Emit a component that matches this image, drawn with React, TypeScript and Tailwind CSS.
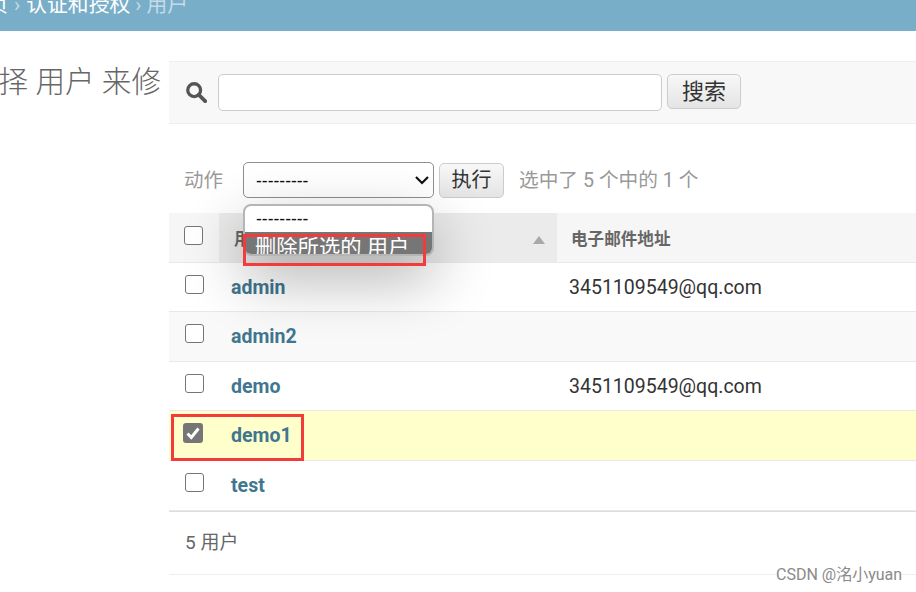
import React from "react";

const font = { fontFamily: '"Roboto", "Noto Sans CJK SC", sans-serif' };

function Box({ checked = false, cls = "" }: { checked?: boolean; cls?: string }) {
  return checked ? (
    <span className={`-ml-[2px] flex h-[20px] w-[20px] items-center justify-center rounded-[3px] bg-[#767676] ${cls}`}>
      <svg viewBox="0 0 20 20" className="h-[20px] w-[20px]">
        <path d="M4.5 10.5 L8.3 14.5 L15.5 5.5" fill="none" stroke="#fff" strokeWidth="3" />
      </svg>
    </span>
  ) : (
    <span className={`block h-[19px] w-[19px] rounded-[3px] border-[1.5px] border-[#767676] bg-white ${cls}`} />
  );
}

const rows = [
  { name: "admin", email: "3451109549@qq.com", h: "h-[49px]", bg: "bg-white", t: "mt-[2px]" },
  { name: "admin2", email: "", h: "h-[50px]", bg: "bg-[#f9f9f9]", t: "" },
  { name: "demo", email: "3451109549@qq.com", h: "h-[49px]", bg: "bg-white", t: "mt-[2px]" },
  { name: "demo1", email: "", h: "h-[50px]", bg: "bg-[#ffffcc]", checked: true, t: "" },
  { name: "test", email: "", h: "h-[50px]", bg: "bg-white", t: "" },
];

export default function App() {
  return (
    <div className="relative h-[592px] w-[916px] overflow-hidden bg-white" style={font}>
      <div className="flex h-[31px] items-end overflow-hidden bg-[#79aec8] pb-[11px] text-[20.8px] leading-[30px] whitespace-nowrap text-white">
        <span className="w-[8px] overflow-hidden [direction:rtl]">页</span>
        <span className="ml-[6px] text-[#c4dce8]">›</span>
        <span className="ml-[6px]">认证和授权</span>
        <span className="ml-[5px] text-[#c4dce8]">›</span>
        <span className="ml-[5px] text-[#c4dce8]">用户</span>
      </div>

      <div className="flex">
        <div className="mr-[8px] w-[161px] shrink-0 overflow-hidden pt-[34px]">
          <div className="-ml-[31px] text-[29.6px] leading-[34px] font-light whitespace-nowrap text-[#666]">选择 用户 来修改</div>
        </div>

        <div className="min-w-0 flex-1 pt-[30px]">
          <div className="flex h-[63px] items-center border-y border-[#eeeeee] bg-[#f8f8f8] pl-[16px]">
            <svg viewBox="0 0 24 24" className="-mt-[2px] mr-[1px] h-[22px] w-[22px]">
              <circle cx="10" cy="10" r="7" fill="none" stroke="#555" strokeWidth="3.6" />
              <path d="M15 15 L22 22" stroke="#555" strokeWidth="4.2" strokeLinecap="round" />
            </svg>
            <div className="ml-[10px] h-[37px] w-[444px] rounded-[5px] border border-[#cccccc] bg-white" />
            <button className="-mt-[2px] ml-[5px] h-[35px] w-[74px] rounded-[5px] border border-[#cccccc] bg-gradient-to-b from-[#f8f8f8] to-[#e4e4e4] text-[22px] leading-[30px] text-[#333]">
              搜索
            </button>
          </div>

          <div className="mt-[38px] flex h-[36px] items-center pl-[15px]">
            <span className="mt-[2px] w-[59px] text-[19.5px] text-[#999]">动作</span>
            <div className="flex h-[36px] w-[191px] items-center justify-between rounded-[5px] border border-[#8f8f8f] bg-white pr-[3px] pl-[12px] font-['Liberation_Sans'] text-[17.5px] text-[#111]">
              <span className="mt-[2px]">---------</span>
              <svg viewBox="0 0 16 16" className="h-[16px] w-[16px]">
                <path d="M2 5 L8 11 L14 5" fill="none" stroke="#111" strokeWidth="2.2" />
              </svg>
            </div>
            <button className="ml-[5px] h-[35px] w-[65px] rounded-[5px] border border-[#cccccc] bg-gradient-to-b from-[#f8f8f8] to-[#e4e4e4] text-[20px] leading-[30px] text-[#333]">
              执行
            </button>
            <span className="mt-[1px] ml-[15px] text-[19.7px] whitespace-nowrap text-[#999]">选中了 5 个中的 1 个</span>
          </div>

          <div className="mt-[15px] flex h-[50px] border-b border-[#e8e8e8] bg-[#f6f6f6]">
            <div className="flex w-[50px] items-center pl-[15px]">
              <Box cls="-mt-[4px]" />
            </div>
            <div className="relative flex w-[338px] items-center bg-[#ebebeb] pl-[15px] text-[16.6px] font-bold text-[#666]">
              <span className="mt-[5px]">用户名</span>
              <span className="absolute top-[23px] right-[12px] h-0 w-0 border-x-[6px] border-b-[8px] border-x-transparent border-b-[#a9a9a9]" />
            </div>
            <div className="flex flex-1 items-center pl-[14px] text-[16.6px] font-bold text-[#666]">
              <span className="mt-[5px]">电子邮件地址</span>
            </div>
          </div>

          {rows.map((r) => (
            <div key={r.name} className={`flex ${r.h} border-b border-[#e8e8e8] ${r.bg}`}>
              <div className="flex w-[50px] items-center pl-[16px]">
                <Box checked={r.checked} cls="-mt-[6px]" />
              </div>
              <div className="flex w-[338px] items-center pl-[12px] text-[19.5px] font-bold text-[#417690]">
                <span className={r.t}>{r.name}</span>
              </div>
              <div className="flex flex-1 items-center pl-[12px] text-[19.5px] text-[#333]">
                <span className={r.t}>{r.email}</span>
              </div>
            </div>
          ))}

          <div className="flex h-[64px] items-center border-t border-b border-t-[#dddddd] border-b-[#eeeeee] pl-[16px] text-[19px] text-[#666]">
            5 用户
          </div>
        </div>
      </div>

      <div className="absolute top-[204px] left-[243px] flex h-[52px] w-[191px] flex-col overflow-hidden rounded-[8px] border-2 border-[#b5b5b5] bg-white shadow-[0_22px_60px_rgba(0,0,0,0.32)]">
        <div className="h-[26px] pl-[11px] font-['Liberation_Sans'] text-[17.5px] leading-[26px] text-[#111]">---------</div>
        <div className="flex-1 bg-[#767676] pl-[10px] text-[21.3px] leading-[31px] whitespace-nowrap text-white">删除所选的 用户</div>
      </div>

      <div className="absolute top-[234px] left-[243px] h-[32px] w-[183px] border-[3px] border-[#f43b3b]" />
      <div className="absolute top-[414px] left-[171px] h-[47px] w-[133px] border-[3px] border-[#f43b3b]" />

      <div className="absolute top-[565px] left-[776px] bg-white/70 text-[16px] leading-[20px] whitespace-nowrap text-[#8a8a8a]">
        CSDN @洺小yuan
      </div>
    </div>
  );
}
